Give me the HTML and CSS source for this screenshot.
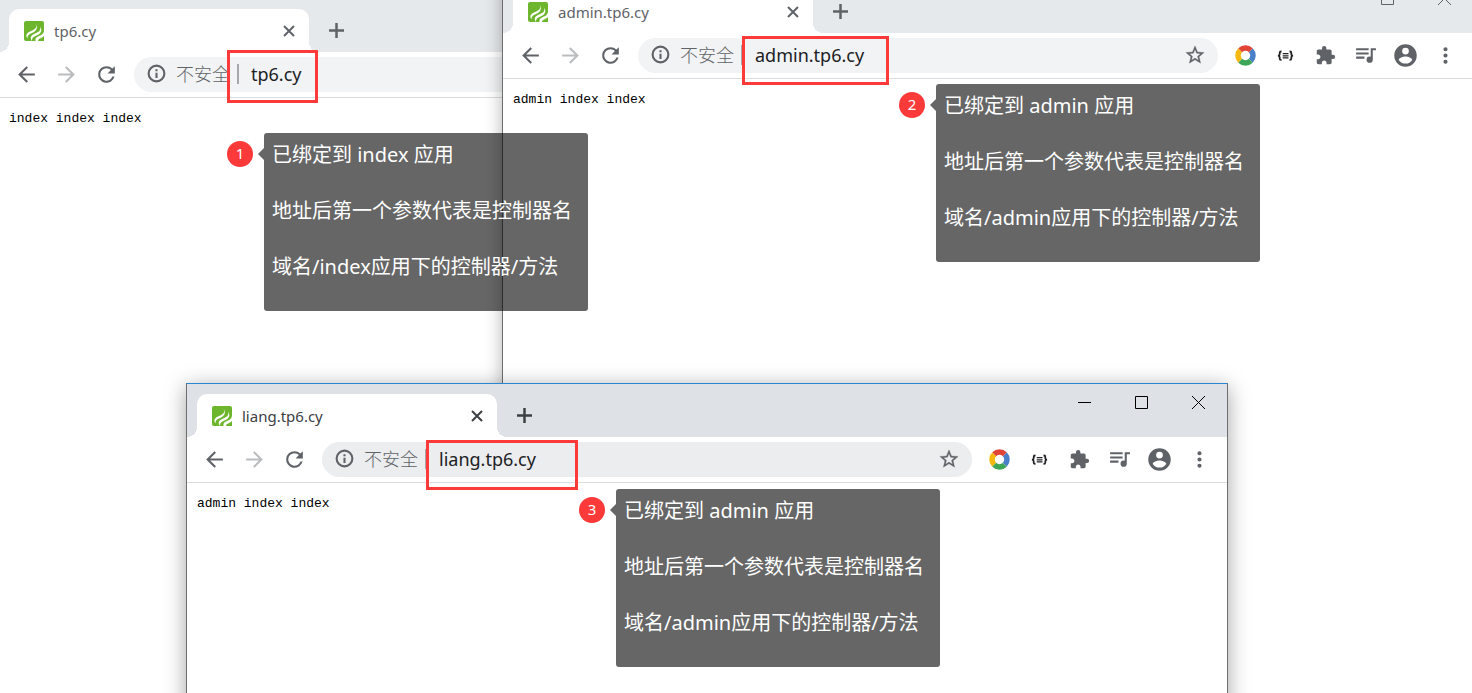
FILE: index.html
```
<!DOCTYPE html>
<html lang="zh-CN">
<head>
  <meta charset="UTF-8" />
  <title>多应用域名绑定</title>
  <meta name="viewport" content="width=device-width, initial-scale=1.0" />
  <link rel="stylesheet" href="styles.css">
</head>
<body>

  <!-- Shared icons -->
  <svg class="sprite" aria-hidden="true">
    <symbol id="i-logo" viewBox="0 0 20 20">
      <path fill="#6cb52d" d="M2 0h16a2 2 0 0 1 2 2v18H2a2 2 0 0 1-2-2V2a2 2 0 0 1 2-2z"/>
      <path fill="#fff" d="M11.500 2.500c2.500 4-1 6-4.500 7.500-4 1.600-6 4-3.500 7.500-.3-3 1.500-4.300 4.500-5.500 4.500-1.800 6.500-5.500 3.500-9.500z"/>
      <path fill="#fff" d="M16 5.500c1.500 4-1.500 5.500-5 7-4 1.700-5.500 4-3 7.500-.2-3 1.500-4.200 4.500-5.500 4.200-1.800 6.500-5 3.500-9z"/>
      <path fill="#fff" d="M20 9.500c-.5 3.500-2.500 4.500-5 5.500-3 1.300-4 2.700-3.500 5h2.500c.3-1.700 1.500-2.300 3.500-3.200 1-.5 1.800-1 2.500-1.800z"/>
    </symbol>
    <symbol id="i-close" viewBox="0 0 20 20"><path d="M5 5l10 10M15 5L5 15" stroke="currentColor" stroke-width="2"/></symbol>
    <symbol id="i-plus" viewBox="0 0 25 25"><path d="M12.500 5v15M5 12.500h15" stroke="currentColor" stroke-width="2.500"/></symbol>
    <symbol id="i-back" viewBox="0 0 24 24"><path d="M20 11H7.830l5.590-5.590L12 4l-8 8 8 8 1.410-1.410L7.830 13H20v-2z"/></symbol>
    <symbol id="i-forward" viewBox="0 0 24 24"><path d="M12 4l-1.410 1.410L16.170 11H4v2h12.170l-5.580 5.590L12 20l8-8z"/></symbol>
    <symbol id="i-reload" viewBox="0 0 24 24"><path d="M17.650 6.350A7.960 7.960 0 0 0 12 4a8 8 0 1 0 7.730 10h-2.080A6 6 0 1 1 12 6c1.660 0 3.140.69 4.220 1.780L13 11h7V4l-2.350 2.350z"/></symbol>
    <symbol id="i-info" viewBox="0 0 24 24"><path d="M10.800 17h2.400v-6h-2.400v6zM12 1.800a10.200 10.200 0 1 0 0 20.400 10.200 10.200 0 0 0 0-20.400zm0 18a7.800 7.800 0 1 1 0-15.600 7.800 7.800 0 0 1 0 15.600zM10.800 9.300h2.400V7h-2.400v2.300z"/></symbol>
    <symbol id="i-star" viewBox="0 0 24 24"><path stroke="currentColor" stroke-width=".3" d="M22 9.240l-7.190-.62L12 2 9.190 8.630 2 9.240l5.460 4.730L5.820 21 12 17.270 18.180 21l-1.630-7.030L22 9.240zM12 15.400l-3.760 2.270 1-4.280-3.320-2.880 4.380-.38L12 6.100l1.710 4.040 4.380.38-3.320 2.880 1 4.280L12 15.400z"/></symbol>
    <symbol id="i-ring" viewBox="0 0 25 25">
      <g fill="none" stroke-width="5.500">
        <path stroke="#4a7fc9" d="M17.800 7.200a7.500 7.500 0 0 1 0 10.600"/>
        <path stroke="#f5b912" d="M7.200 17.800a7.500 7.500 0 0 1 0-10.600"/>
        <path stroke="#e04437" d="M7.200 7.200a7.500 7.500 0 0 1 10.600 0"/>
        <path stroke="#3ea757" d="M17.800 17.800a7.500 7.500 0 0 1-10.600 0"/>
      </g>
    </symbol>
    <symbol id="i-json" viewBox="0 0 25 25">
      <g fill="none" stroke="#202124">
        <path stroke-width="1.800" d="M8.500 8.500H8Q6.700 8.500 6.700 10v1.200q0 1.300-1.700 1.500 1.700.2 1.700 1.500v1.200q0 1.500 1.300 1.500h.5M16.500 8.500h.5q1.300 0 1.300 1.500v1.200q0 1.300 1.700 1.500-1.700.2-1.700 1.500v1.200q0 1.500-1.300 1.500h-.5"/>
        <path stroke-width="1.200" d="M9.700 10.700h5.800M9.700 12.800h5.800M9.700 14.900h5.800"/>
      </g>
    </symbol>
    <symbol id="i-puzzle" viewBox="0 0 24 24"><path d="M20.500 11H19V7c0-1.100-.9-2-2-2h-4V3.500a2.500 2.500 0 0 0-5 0V5H4c-1.100 0-1.990.9-1.990 2v3.800H3.500c1.490 0 2.700 1.210 2.700 2.700s-1.210 2.700-2.700 2.700H2V20c0 1.100.9 2 2 2h3.800v-1.500c0-1.490 1.210-2.700 2.700-2.700s2.700 1.210 2.700 2.700V22H17c1.100 0 2-.9 2-2v-4h1.500a2.500 2.500 0 0 0 0-5z"/></symbol>
    <symbol id="i-music" viewBox="0 1 24 24"><path d="M15 6H3v2h12V6zm0 4H3v2h12v-2zM3 16h8v-2H3v2zM17 6v8.180c-.31-.11-.65-.18-1-.18a3 3 0 1 0 3 3V8h3V6h-5z"/></symbol>
    <symbol id="i-user" viewBox="0 0 24 24"><path d="M12 2a10 10 0 1 0 0 20 10 10 0 0 0 0-20zm0 3a3 3 0 1 1 0 6 3 3 0 0 1 0-6zm0 14.200a7.200 7.200 0 0 1-6-3.220c.03-1.990 4-3.080 6-3.080 1.990 0 5.970 1.090 6 3.080a7.200 7.200 0 0 1-6 3.220z"/></symbol>
    <symbol id="i-more" viewBox="0 0 24 24"><path d="M12 8a2 2 0 1 0 0-4 2 2 0 0 0 0 4zm0 2a2 2 0 1 0 0 4 2 2 0 0 0 0-4zm0 6a2 2 0 1 0 0 4 2 2 0 0 0 0-4z"/></symbol>
    <symbol id="i-min" viewBox="0 0 13 13"><path d="M0 6.500h13" stroke="currentColor"/></symbol>
    <symbol id="i-max" viewBox="0 0 13 13"><path d="M.5.5h12v12H.5z" fill="none" stroke="currentColor"/></symbol>
    <symbol id="i-exit" viewBox="0 0 13 13"><path d="M0 0l13 13M13 0L0 13" stroke="currentColor"/></symbol>
  </svg>

  <main class="desktop">

    <!-- tp6.cy -->
    <section class="window window-index">
      <header class="tab-strip">
        <div class="tab">
          <svg class="favicon"><use href="#i-logo"/></svg>
          <span class="tab-title">tp6.cy</span>
          <button class="tab-close" aria-label="关闭标签页"><svg><use href="#i-close"/></svg></button>
        </div>
        <button class="tool new-tab" aria-label="新标签页"><svg><use href="#i-plus"/></svg></button>
      </header>
      <div class="toolbar">
        <button class="tool" aria-label="后退"><svg><use href="#i-back"/></svg></button>
        <button class="tool" aria-label="前进" disabled><svg><use href="#i-forward"/></svg></button>
        <button class="tool" aria-label="刷新"><svg><use href="#i-reload"/></svg></button>
        <div class="omnibox">
          <svg class="info"><use href="#i-info"/></svg>
          <label for="url-index">不安全</label>
          <input type="text" id="url-index" value="tp6.cy" />
        </div>
      </div>
      <div class="page">index index index</div>
    </section>

    <!-- admin.tp6.cy -->
    <section class="window window-admin">
      <header class="tab-strip">
        <div class="tab">
          <svg class="favicon"><use href="#i-logo"/></svg>
          <span class="tab-title">admin.tp6.cy</span>
          <button class="tab-close" aria-label="关闭标签页"><svg><use href="#i-close"/></svg></button>
        </div>
        <button class="tool new-tab" aria-label="新标签页"><svg><use href="#i-plus"/></svg></button>
        <div class="controls">
          <button aria-label="最小化"><svg><use href="#i-min"/></svg></button>
          <button aria-label="最大化"><svg><use href="#i-max"/></svg></button>
          <button aria-label="关闭"><svg><use href="#i-exit"/></svg></button>
        </div>
      </header>
      <div class="toolbar">
        <button class="tool" aria-label="后退"><svg><use href="#i-back"/></svg></button>
        <button class="tool" aria-label="前进" disabled><svg><use href="#i-forward"/></svg></button>
        <button class="tool" aria-label="刷新"><svg><use href="#i-reload"/></svg></button>
        <div class="omnibox">
          <svg class="info"><use href="#i-info"/></svg>
          <label for="url-admin">不安全</label>
          <input type="text" id="url-admin" value="admin.tp6.cy" />
          <button class="star" aria-label="收藏"><svg><use href="#i-star"/></svg></button>
        </div>
        <button class="tool" aria-label="扩展"><svg><use href="#i-ring"/></svg></button>
        <button class="tool" aria-label="JSON"><svg><use href="#i-json"/></svg></button>
        <button class="tool puzzle" aria-label="扩展程序"><svg><use href="#i-puzzle"/></svg></button>
        <button class="tool" aria-label="媒体"><svg><use href="#i-music"/></svg></button>
        <button class="tool user" aria-label="用户"><svg><use href="#i-user"/></svg></button>
        <button class="tool" aria-label="更多"><svg><use href="#i-more"/></svg></button>
      </div>
      <div class="page">admin index index</div>
    </section>

    <!-- liang.tp6.cy -->
    <section class="window window-liang active">
      <header class="tab-strip">
        <div class="tab">
          <svg class="favicon"><use href="#i-logo"/></svg>
          <span class="tab-title">liang.tp6.cy</span>
          <button class="tab-close" aria-label="关闭标签页"><svg><use href="#i-close"/></svg></button>
        </div>
        <button class="tool new-tab" aria-label="新标签页"><svg><use href="#i-plus"/></svg></button>
        <div class="controls">
          <button aria-label="最小化"><svg><use href="#i-min"/></svg></button>
          <button aria-label="最大化"><svg><use href="#i-max"/></svg></button>
          <button aria-label="关闭"><svg><use href="#i-exit"/></svg></button>
        </div>
      </header>
      <div class="toolbar">
        <button class="tool" aria-label="后退"><svg><use href="#i-back"/></svg></button>
        <button class="tool" aria-label="前进" disabled><svg><use href="#i-forward"/></svg></button>
        <button class="tool" aria-label="刷新"><svg><use href="#i-reload"/></svg></button>
        <div class="omnibox">
          <svg class="info"><use href="#i-info"/></svg>
          <label for="url-liang">不安全</label>
          <input type="text" id="url-liang" value="liang.tp6.cy" />
          <button class="star" aria-label="收藏"><svg><use href="#i-star"/></svg></button>
        </div>
        <button class="tool" aria-label="扩展"><svg><use href="#i-ring"/></svg></button>
        <button class="tool" aria-label="JSON"><svg><use href="#i-json"/></svg></button>
        <button class="tool puzzle" aria-label="扩展程序"><svg><use href="#i-puzzle"/></svg></button>
        <button class="tool" aria-label="媒体"><svg><use href="#i-music"/></svg></button>
        <button class="tool user" aria-label="用户"><svg><use href="#i-user"/></svg></button>
        <button class="tool" aria-label="更多"><svg><use href="#i-more"/></svg></button>
      </div>
      <div class="page">admin index index</div>
    </section>

    <!-- Red frames -->
    <div class="frame frame-index"></div>
    <div class="frame frame-admin"></div>
    <div class="frame frame-liang"></div>

    <!-- Notes -->
    <div class="note note-index">
      <span class="num">1</span>
      <div class="bubble">
        <p>已绑定到 index 应用</p>
        <p>地址后第一个参数代表是控制器名</p>
        <p>域名/index应用下的控制器/方法</p>
      </div>
    </div>
    <div class="note note-admin">
      <span class="num">2</span>
      <div class="bubble">
        <p>已绑定到 admin 应用</p>
        <p>地址后第一个参数代表是控制器名</p>
        <p>域名/admin应用下的控制器/方法</p>
      </div>
    </div>
    <div class="note note-liang">
      <span class="num">3</span>
      <div class="bubble">
        <p>已绑定到 admin 应用</p>
        <p>地址后第一个参数代表是控制器名</p>
        <p>域名/admin应用下的控制器/方法</p>
      </div>
    </div>
  </main>

</body>
</html>
```
FILE: styles.css
```
* {
  box-sizing: border-box;
}

body {
  margin: 0;
  font-family: "Noto Sans", "Noto Sans CJK SC", sans-serif;
  background: #fff;
}

p {
  margin: 0;
}

button {
  display: flex;
  align-items: center;
  justify-content: center;
  flex: none;
  padding: 0;
  border: none;
  background: none;
  color: inherit;
}

svg {
  display: block;
  flex: none;
  fill: currentColor;
}

.sprite {
  position: absolute;
  width: 0;
  height: 0;
}

.desktop {
  position: relative;
  height: 100vh;
  overflow: hidden;
}

/* Browser windows */
.window {
  --strip: #e5e9ec;
  --box: #f1f3f4;
  --ink: #5f6368;
  position: absolute;
  display: flex;
  flex-direction: column;
  background: #fff;
  border: 1px solid #6e6e6e;
  box-shadow: 0 2px 16px rgba(0, 0, 0, 0.3);
}

.window.active {
  --strip: #dee1e6;
  --box: #ebedef;
  --ink: #3c4043;
  border-top-color: #2a86d1;
  box-shadow: 0 4px 20px rgba(0, 0, 0, 0.36);
}

.window-index {
  left: -2px;
  top: -2px;
  width: 66%;
  bottom: -40px;
}

.window-admin {
  left: 502px;
  top: -21px;
  right: -2px;
  bottom: -40px;
}

.window-liang {
  left: 186px;
  top: 383px;
  right: 244px;
  bottom: -40px;
}

/* Tabs */
.tab-strip {
  display: flex;
  align-items: flex-end;
  height: 53px;
  padding-left: 10px;
  background: var(--strip);
  color: var(--ink);
}

.tab {
  position: relative;
  display: flex;
  align-items: center;
  gap: 10px;
  width: 300px;
  height: 43px;
  padding: 0 10px 0 15px;
  border-radius: 10px 10px 0 0;
  background: #fff;
}

.tab::before,
.tab::after {
  content: "";
  position: absolute;
  bottom: 0;
  width: 10px;
  height: 10px;
}

.tab::before {
  left: -10px;
  background: radial-gradient(circle at 0 0, transparent 10px, #fff 10px);
}

.tab::after {
  right: -10px;
  background: radial-gradient(circle at 100% 0, transparent 10px, #fff 10px);
}

.favicon,
.tab-close svg {
  width: 20px;
  height: 20px;
}

.tab-title {
  flex: 1;
  font-size: 15px;
}

.new-tab {
  margin: 0 auto 4px 10px;
}

.controls {
  display: flex;
  align-self: flex-start;
}

.controls button {
  width: 57px;
  height: 37px;
}

.controls svg {
  width: 13px;
  height: 13px;
}

.active .controls {
  color: #000;
}

/* Toolbar */
.toolbar {
  display: flex;
  align-items: center;
  gap: 5px;
  height: 46px;
  padding: 0 10px;
  border-bottom: 1px solid #dadce0;
  color: #5f6368;
}

.tool {
  width: 35px;
  height: 35px;
}

.tool svg {
  width: 25px;
  height: 25px;
}

.tool:disabled {
  color: #babcbe;
}

.tool.puzzle svg {
  width: 21px;
  height: 21px;
}

.tool.user svg {
  width: 27px;
  height: 27px;
}

.omnibox {
  flex: 1;
  display: flex;
  align-items: center;
  min-width: 0;
  height: 35px;
  margin: 0 5px;
  padding: 0 12px 2px 12px;
  border-radius: 18px;
  background: var(--box);
}

.info {
  width: 21px;
  height: 21px;
}

.omnibox label {
  flex: none;
  margin-left: 9px;
  padding-right: 7px;
  border-right: 2px solid #a5a8ab;
  font-size: 18px;
  font-weight: 300;
  line-height: 20px;
}

.omnibox input {
  flex: 1;
  min-width: 0;
  height: 30px;
  padding: 0 0 0 12px;
  border: none;
  background: none;
  color: #202124;
  font-family: inherit;
  font-size: 18px;
}

.star svg {
  width: 22px;
  height: 22px;
}

.page {
  padding: 11px 10px;
  font-family: "Liberation Mono", monospace;
  font-size: 13px;
  line-height: 20px;
  color: #000;
}

/* Red frames */
.frame {
  position: absolute;
  border: 3px solid #fc3a3a;
}

.frame-index {
  left: 227px;
  top: 50px;
  width: 91px;
  height: 53px;
}

.frame-admin {
  left: 742px;
  top: 36px;
  width: 147px;
  height: 49px;
}

.frame-liang {
  left: 426px;
  top: 440px;
  width: 152px;
  height: 50px;
}

/* Notes */
.note {
  position: absolute;
  display: flex;
  gap: 11px;
  color: #fff;
}

.note-index {
  left: 227px;
  top: 133px;
}

.note-admin {
  left: 899px;
  top: 84px;
}

.note-liang {
  left: 579px;
  top: 489px;
}

.num {
  width: 26px;
  height: 26px;
  margin-top: 8px;
  border-radius: 50%;
  background: #fc3a3a;
  font-size: 15px;
  line-height: 24px;
  text-align: center;
}

.bubble {
  position: relative;
  display: flex;
  flex-direction: column;
  gap: 28px;
  width: 324px;
  padding: 8px 8px 30px;
  border-radius: 3px;
  background: rgba(0, 0, 0, 0.6);
  font-size: 20px;
  line-height: 28px;
  white-space: nowrap;
}

.bubble::before {
  content: "";
  position: absolute;
  left: -6px;
  top: 15px;
  border: 6px solid transparent;
  border-left: none;
  border-right-color: rgba(0, 0, 0, 0.6);
}
```
